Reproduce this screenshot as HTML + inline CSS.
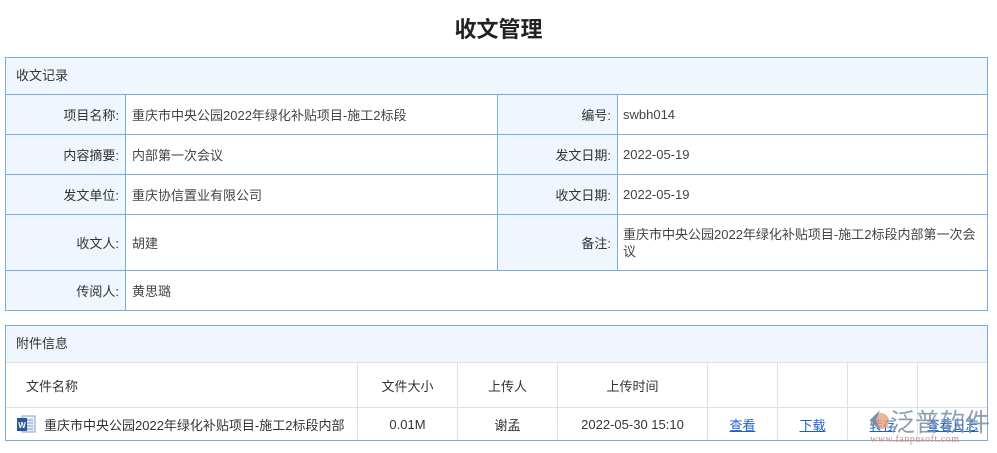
<!DOCTYPE html>
<html><head><meta charset="utf-8"><style>
*{margin:0;padding:0;box-sizing:border-box}
body{width:997px;height:453px;background:#fff;font-family:"Liberation Sans","Noto Sans CJK SC",sans-serif;font-size:13px;color:#333;position:relative;overflow:hidden}
.t{position:absolute;left:0;width:997px;top:12px;text-align:center;font-size:22px;font-weight:bold;color:#222}
.a{position:absolute;display:flex;align-items:center}
.p{position:absolute;border:1px solid #7aacdc}
.hd{background:#f0f6fe;border-bottom:1px solid #7aacdc;padding-left:10px;padding-bottom:3px}
.lb{background:#f0f6fe;justify-content:flex-end;padding-right:6px;border-right:1px solid #7aacdc}
.bl{border-bottom:1px solid #7aacdc}
.v{color:#444}
.cl{border-right:1px solid #e0e0e0;border-bottom:1px solid #e0e0e0;justify-content:center}
a{color:#1d5fc9;text-decoration:underline}
</style></head><body>
<div class="t">收文管理</div>
<div class="p" style="left:5px;top:57px;width:983px;height:254px"></div>
<div class="a hd" style="left:6px;top:58px;width:981px;height:37px">收文记录</div>

<div class="a lb bl" style="left:6px;top:95px;width:120px;height:40px">项目名称:</div>
<div class="a bl v" style="left:126px;top:95px;width:372px;height:40px;padding-left:6px;border-right:1px solid #7aacdc">重庆市中央公园2022年绿化补贴项目-施工2标段</div>
<div class="a lb bl" style="left:498px;top:95px;width:120px;height:40px">编号:</div>
<div class="a bl v" style="left:618px;top:95px;width:369px;height:40px;padding-left:5px">swbh014</div>

<div class="a lb bl" style="left:6px;top:135px;width:120px;height:40px">内容摘要:</div>
<div class="a bl v" style="left:126px;top:135px;width:372px;height:40px;padding-left:6px;border-right:1px solid #7aacdc">内部第一次会议</div>
<div class="a lb bl" style="left:498px;top:135px;width:120px;height:40px">发文日期:</div>
<div class="a bl v" style="left:618px;top:135px;width:369px;height:40px;padding-left:5px">2022-05-19</div>

<div class="a lb bl" style="left:6px;top:175px;width:120px;height:40px">发文单位:</div>
<div class="a bl v" style="left:126px;top:175px;width:372px;height:40px;padding-left:6px;border-right:1px solid #7aacdc">重庆协信置业有限公司</div>
<div class="a lb bl" style="left:498px;top:175px;width:120px;height:40px">收文日期:</div>
<div class="a bl v" style="left:618px;top:175px;width:369px;height:40px;padding-left:5px">2022-05-19</div>

<div class="a lb bl" style="left:6px;top:215px;width:120px;height:56px">收文人:</div>
<div class="a bl v" style="left:126px;top:215px;width:372px;height:56px;padding-left:6px;border-right:1px solid #7aacdc">胡建</div>
<div class="a lb bl" style="left:498px;top:215px;width:120px;height:56px">备注:</div>
<div class="a bl v" style="left:618px;top:215px;width:369px;height:56px;padding-left:5px;line-height:17px">重庆市中央公园2022年绿化补贴项目-施工2标段内部第一次会议</div>

<div class="a lb" style="left:6px;top:271px;width:120px;height:39px">传阅人:</div>
<div class="a v" style="left:126px;top:271px;width:300px;height:39px;padding-left:6px">黄思璐</div>

<div class="p" style="left:5px;top:325px;width:983px;height:116px"></div>
<div class="a hd" style="left:6px;top:326px;width:981px;height:37px;border-bottom-color:#e0e0e0">附件信息</div>
<div class="a cl" style="left:6px;top:363px;width:352px;height:45px;justify-content:flex-start;padding-left:20px">文件名称</div>
<div class="a cl" style="left:358px;top:363px;width:100px;height:45px">文件大小</div>
<div class="a cl" style="left:458px;top:363px;width:100px;height:45px">上传人</div>
<div class="a cl" style="left:558px;top:363px;width:150px;height:45px">上传时间</div>
<div class="a cl" style="left:708px;top:363px;width:70px;height:45px"></div>
<div class="a cl" style="left:778px;top:363px;width:70px;height:45px"></div>
<div class="a cl" style="left:848px;top:363px;width:70px;height:45px"></div>
<div class="a cl" style="left:918px;top:363px;width:69px;height:45px;border-right:none"></div>

<div class="a cl" style="left:6px;top:408px;width:352px;height:32px;justify-content:flex-start;padding-left:10px;border-bottom:none">
<svg width="20" height="20" viewBox="0 0 20 20" style="margin-right:8px"><rect x="6" y="2" width="13" height="16" fill="#e8eef8" stroke="#8aa5cf"/><path d="M9 6h8M9 9h8M9 12h8M9 15h8" stroke="#7f9cc9"/><rect x="1" y="4" width="10" height="13" fill="#2b5797"/><text x="6" y="14" font-size="8" fill="#fff" text-anchor="middle" font-family="Liberation Sans" font-weight="bold">W</text></svg>重庆市中央公园2022年绿化补贴项目-施工2标段内部</div>
<div class="a cl" style="left:358px;top:408px;width:100px;height:32px;border-bottom:none">0.01M</div>
<div class="a cl" style="left:458px;top:408px;width:100px;height:32px;border-bottom:none">谢孟</div>
<div class="a cl" style="left:558px;top:408px;width:150px;height:32px;border-bottom:none">2022-05-30 15:10</div>
<div class="a cl" style="left:708px;top:408px;width:70px;height:32px;border-bottom:none"><a>查看</a></div>
<div class="a cl" style="left:778px;top:408px;width:70px;height:32px;border-bottom:none"><a>下载</a></div>
<div class="a cl" style="left:848px;top:408px;width:70px;height:32px;border-bottom:none"><a>转存</a></div>
<div class="a cl" style="left:918px;top:408px;width:69px;height:32px;border:none"><a>查看日志</a></div>
<svg style="position:absolute;left:866px;top:408px" width="26" height="24" viewBox="0 0 26 24"><circle cx="15" cy="13" r="8" fill="#e8a080" opacity=".8"/><path d="M14 2 L4 12 L14 22 L10 12Z" fill="#7a8ea8"/></svg>
<div style="position:absolute;left:890px;top:403px;font-size:25px;color:#7d8ea5;opacity:.85;letter-spacing:0px">泛普软件</div>
<div style="position:absolute;left:870px;top:434px;font-size:10px;color:#d08a78;font-family:'Liberation Serif',serif;letter-spacing:0.5px">www.fanpusoft.com</div>
</body></html>
